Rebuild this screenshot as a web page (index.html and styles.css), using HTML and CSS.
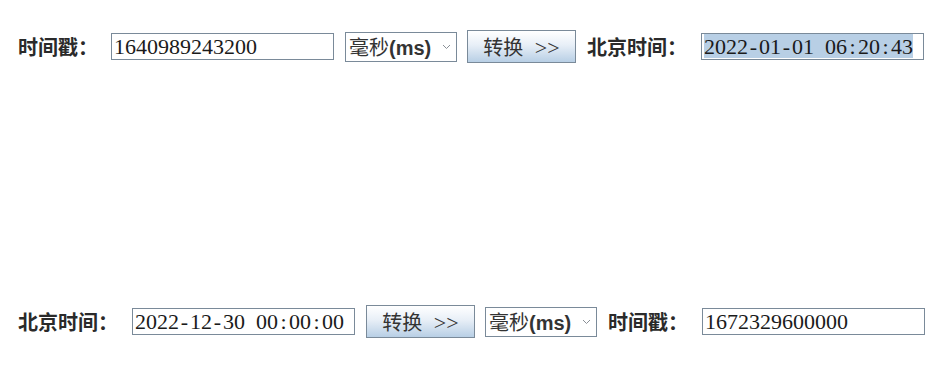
FILE: index.html
```html
<!DOCTYPE html>
<html lang="zh-CN">
<head>
    <meta charset="UTF-8">
    <meta name="viewport" content="width=device-width, initial-scale=1.0">
    <title>时间戳转换</title>
    <link rel="stylesheet" href="styles.css">
</head>
<body>
    <div class="panel">
        <!-- timestamp -> beijing time -->
        <div class="row row-top">
            <span class="label label-short">时间戳：</span>
            <div class="field">1640989243200</div>
            <div class="combo">
                <span class="combo-text">毫秒<b>(ms)</b></span>
                <svg class="chevron" width="9" height="6" viewBox="0 0 9 6"><polyline points="1,1 4.5,4.5 8,1" fill="none" stroke="#8a8f96" stroke-width="1"/></svg>
            </div>
            <button class="btn">转换 <span class="arrows">&gt;&gt;</span></button>
            <span class="label label-long">北京时间：</span>
            <div class="field"><span class="selected">2022<span class="sep">-</span>01<span class="sep">-</span>01<span class="sep"> </span>06<span class="sep">:</span>20<span class="sep">:</span>43</span></div>
        </div>

        <!-- beijing time -> timestamp -->
        <div class="row row-bottom">
            <span class="label label-first">北京时间：</span>
            <div class="field">2022<span class="sep">-</span>12<span class="sep">-</span>30<span class="sep"> </span>00<span class="sep">:</span>00<span class="sep">:</span>00</div>
            <button class="btn">转换 <span class="arrows">&gt;&gt;</span></button>
            <div class="combo">
                <span class="combo-text">毫秒<b>(ms)</b></span>
                <svg class="chevron" width="9" height="6" viewBox="0 0 9 6"><polyline points="1,1 4.5,4.5 8,1" fill="none" stroke="#8a8f96" stroke-width="1"/></svg>
            </div>
            <span class="label label-last">时间戳：</span>
            <div class="field">1672329600000</div>
        </div>
    </div>
</body>
</html>
```

FILE: styles.css
```css
body {
    margin: 0;
    background: #ffffff;
    color: #333333;
    font-family: "Liberation Serif", "Noto Sans CJK SC", serif;
}

.panel {
    width: 935px;
    height: 389px;
    padding-left: 18px;
    box-sizing: border-box;
}

.row {
    display: flex;
    align-items: center;
    height: 33px;
}

.row-top {
    padding-top: 30px;
}

.row-bottom {
    margin-top: 242px;
}

.label {
    font-family: "Noto Sans CJK SC", sans-serif;
    font-size: 20px;
    font-weight: 700;
    color: #2a2a2a;
    white-space: nowrap;
}

.label-short {
    width: 93px;
}

.label-long {
    width: 114px;
    margin-left: 11px;
}

.label-first {
    width: 114px;
}

.label-last {
    width: 94px;
    margin-left: 11px;
}

.field {
    width: 223px;
    height: 27px;
    box-sizing: border-box;
    border: 1px solid #7a8a99;
    padding: 0 2px;
    font-size: 22px;
    line-height: 25px;
    color: #1a1a1a;
    white-space: nowrap;
    overflow: hidden;
    background: #ffffff;
}

.sep {
    display: inline-block;
    width: 11px;
    text-align: center;
}

.selected {
    background: #b8cfe5;
    display: inline-block;
    height: 24px;
}

.combo {
    width: 112px;
    height: 30px;
    box-sizing: border-box;
    border: 1px solid #7a8a99;
    background: #ffffff;
    display: flex;
    align-items: center;
    justify-content: space-between;
    padding: 0 5px 0 3px;
    margin-left: 11px;
}

.row-bottom .combo {
    margin-left: 10px;
}

.combo-text {
    font-family: "Noto Sans CJK SC", sans-serif;
    font-size: 20px;
    color: #333333;
    white-space: nowrap;
}

.combo-text b {
    font-family: "Liberation Sans", Arial, sans-serif;
    font-size: 20px;
    font-weight: 700;
}

.chevron {
    margin-top: 1px;
}

.btn {
    width: 109px;
    height: 33px;
    margin: 0 0 0 10px;
    padding: 0;
    border: 1px solid #7a8a99;
    border-radius: 0;
    background: linear-gradient(#ffffff 0%, #e8eff7 45%, #b8cfe5 100%);
    font-family: "Noto Sans CJK SC", sans-serif;
    font-size: 20px;
    color: #333333;
    white-space: pre;
}

.arrows {
    font-family: "Liberation Serif", serif;
    font-size: 22px;
    margin-left: 7px;
}

.row-bottom .btn {
    margin-left: 11px;
}
```
